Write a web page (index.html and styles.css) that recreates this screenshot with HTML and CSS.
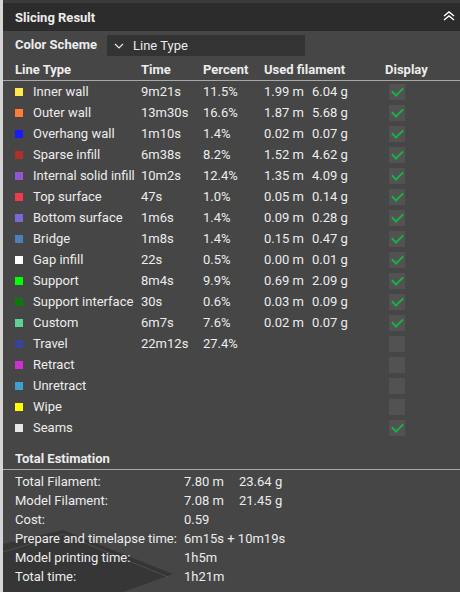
FILE: index.html
```html
<!DOCTYPE html>
<html>
<head>
<meta charset="utf-8">
<link rel="stylesheet" href="styles.css">
</head>
<body>
<div class="app">
  <div class="edge"></div>
  <div class="panel">
    <svg class="scene" width="200" height="70" viewBox="0 0 200 70">
      <polygon points="0,22 60,8 170,52 120,70 0,70" fill="#1a1a1a" opacity="0.35"/>
      <polyline points="0,30 60,12 165,55" fill="none" stroke="#777" stroke-width="1" opacity="0.35"/>
    </svg>
    <div class="topline"></div>
    <div class="titlebar">
      <span class="title">Slicing Result</span>
      <svg class="collapse" width="12" height="10" viewBox="0 0 12 10">
        <polyline points="1,5 6,1 11,5" fill="none" stroke="#fff" stroke-width="1.4"/>
        <polyline points="1,9 6,5 11,9" fill="none" stroke="#fff" stroke-width="1.4"/>
      </svg>
    </div>
    <div class="scheme">
      <span class="bold">Color Scheme</span>
      <div class="combo">
        <svg class="chev" width="10" height="6" viewBox="0 0 10 6">
          <polyline points="1,1 5,5 9,1" fill="none" stroke="#e6e6e6" stroke-width="1.2"/>
        </svg>
        <span>Line Type</span>
      </div>
    </div>
    <div class="row head">
      <span class="c-type bold">Line Type</span>
      <span class="c-time bold">Time</span>
      <span class="c-pct bold">Percent</span>
      <span class="c-used bold">Used filament</span>
      <span class="c-disp bold">Display</span>
    </div>
    <div class="rule"></div>
    <div class="rows">
      <div class="row"><i class="sw" style="background:#ffe94d"></i><span>Inner wall</span><span>9m21s</span><span>11.5%</span><span>1.99 m</span><span>6.04 g</span><b class="cb on"></b></div>
      <div class="row"><i class="sw" style="background:#ff7d38"></i><span>Outer wall</span><span>13m30s</span><span>16.6%</span><span>1.87 m</span><span>5.68 g</span><b class="cb on"></b></div>
      <div class="row"><i class="sw" style="background:#1a1aff"></i><span>Overhang wall</span><span>1m10s</span><span>1.4%</span><span>0.02 m</span><span>0.07 g</span><b class="cb on"></b></div>
      <div class="row"><i class="sw" style="background:#b03029"></i><span>Sparse infill</span><span>6m38s</span><span>8.2%</span><span>1.52 m</span><span>4.62 g</span><b class="cb on"></b></div>
      <div class="row"><i class="sw" style="background:#9654cc"></i><span>Internal solid infill</span><span>10m2s</span><span>12.4%</span><span>1.35 m</span><span>4.09 g</span><b class="cb on"></b></div>
      <div class="row"><i class="sw" style="background:#f03b4c"></i><span>Top surface</span><span>47s</span><span>1.0%</span><span>0.05 m</span><span>0.14 g</span><b class="cb on"></b></div>
      <div class="row"><i class="sw" style="background:#7d67d4"></i><span>Bottom surface</span><span>1m6s</span><span>1.4%</span><span>0.09 m</span><span>0.28 g</span><b class="cb on"></b></div>
      <div class="row"><i class="sw" style="background:#4d80ba"></i><span>Bridge</span><span>1m8s</span><span>1.4%</span><span>0.15 m</span><span>0.47 g</span><b class="cb on"></b></div>
      <div class="row"><i class="sw" style="background:#ffffff"></i><span>Gap infill</span><span>22s</span><span>0.5%</span><span>0.00 m</span><span>0.01 g</span><b class="cb on"></b></div>
      <div class="row"><i class="sw" style="background:#00ff00"></i><span>Support</span><span>8m4s</span><span>9.9%</span><span>0.69 m</span><span>2.09 g</span><b class="cb on"></b></div>
      <div class="row"><i class="sw" style="background:#0a7a0a"></i><span>Support interface</span><span>30s</span><span>0.6%</span><span>0.03 m</span><span>0.09 g</span><b class="cb on"></b></div>
      <div class="row"><i class="sw" style="background:#5ed194"></i><span>Custom</span><span>6m7s</span><span>7.6%</span><span>0.02 m</span><span>0.07 g</span><b class="cb on"></b></div>
      <div class="row"><i class="sw" style="background:#38449a"></i><span>Travel</span><span>22m12s</span><span>27.4%</span><span></span><span></span><b class="cb"></b></div>
      <div class="row"><i class="sw" style="background:#cc33cc"></i><span>Retract</span><span></span><span></span><span></span><span></span><b class="cb"></b></div>
      <div class="row"><i class="sw" style="background:#40a0cc"></i><span>Unretract</span><span></span><span></span><span></span><span></span><b class="cb"></b></div>
      <div class="row"><i class="sw" style="background:#ffff00"></i><span>Wipe</span><span></span><span></span><span></span><span></span><b class="cb"></b></div>
      <div class="row"><i class="sw" style="background:#e6e6e6"></i><span>Seams</span><span></span><span></span><span></span><span></span><b class="cb on"></b></div>
    </div>
    <div class="total-title bold">Total Estimation</div>
    <div class="rule"></div>
    <div class="totals">
      <div class="trow"><span>Total Filament:</span><span>7.80 m</span><span>23.64 g</span></div>
      <div class="trow"><span>Model Filament:</span><span>7.08 m</span><span>21.45 g</span></div>
      <div class="trow"><span>Cost:</span><span>0.59</span><span></span></div>
      <div class="trow"><span>Prepare and timelapse time:</span><span class="wide">6m15s + 10m19s</span></div>
      <div class="trow"><span>Model printing time:</span><span>1h5m</span><span></span></div>
      <div class="trow"><span>Total time:</span><span>1h21m</span><span></span></div>
    </div>
  </div>
</div>
</body>
</html>
```
FILE: styles.css
```css
* { box-sizing: border-box; }
html, body {
  margin: 0;
  width: 460px;
  height: 592px;
  overflow: hidden;
  background: #464646;
  font-family: Roboto, "Noto Sans", sans-serif;
  font-size: 13px;
  color: #ececec;
}
.app { display: flex; height: 592px; }
.edge { width: 3px; background: #d6d6d6; flex: none; }
.panel {
  flex: 1;
  position: relative;
  background: #464646;
  display: flex;
  flex-direction: column;
}
.panel > div { position: relative; z-index: 1; }
.scene { position: absolute; left: 0; bottom: 0; z-index: 0; pointer-events: none; }
.topline { height: 3px; background: #3b3b3b; }
.titlebar {
  height: 28px;
  background: #2c2c2c;
  display: flex;
  align-items: center;
  justify-content: space-between;
  padding: 0 5px 0 12px;
}
.title { font-weight: 700; font-size: 13px; }
.collapse { margin-top: -2px; }
.bold { font-weight: 700; }
.scheme {
  height: 27px;
  display: flex;
  align-items: center;
  padding-left: 12px;
  gap: 10px;
}
.combo {
  width: 198px;
  height: 21px;
  background: #333333;
  display: flex;
  align-items: center;
  gap: 9px;
  padding-left: 7px;
  margin-top: 1px;
}
.chev { margin-top: 1px; }
.row {
  display: grid;
  grid-template-columns: 18px 108px 62px 61px 48px 77px 20px;
  align-items: center;
  height: 21px;
  padding-left: 12px;
  white-space: nowrap;
}
.row.head { height: 22px; }
.head .c-type { grid-column: 1 / 3; }
.head .c-used { grid-column: 5 / 7; }
.head .c-disp { grid-column: 7; margin-left: -4px; }
.rule { height: 1px; background: #a8a8a8; }
.sw { width: 8px; height: 8px; display: block; }
.cb {
  width: 16px;
  height: 16px;
  background: #525252;
  position: relative;
  display: block;
}
.cb.on::after {
  content: "";
  position: absolute;
  left: 5px;
  top: 1px;
  width: 5px;
  height: 9px;
  border: solid #16b34a;
  border-width: 0 2.5px 2.5px 0;
  transform: rotate(45deg);
}
.total-title {
  height: 31px;
  display: flex;
  align-items: flex-end;
  padding: 0 0 3px 12px;
}
.totals { padding-top: 2px; }
.trow {
  display: grid;
  grid-template-columns: 169px 55px 80px;
  height: 19px;
  align-items: center;
  padding-left: 12px;
  white-space: nowrap;
}
.trow .wide { grid-column: 2 / 4; }
```
